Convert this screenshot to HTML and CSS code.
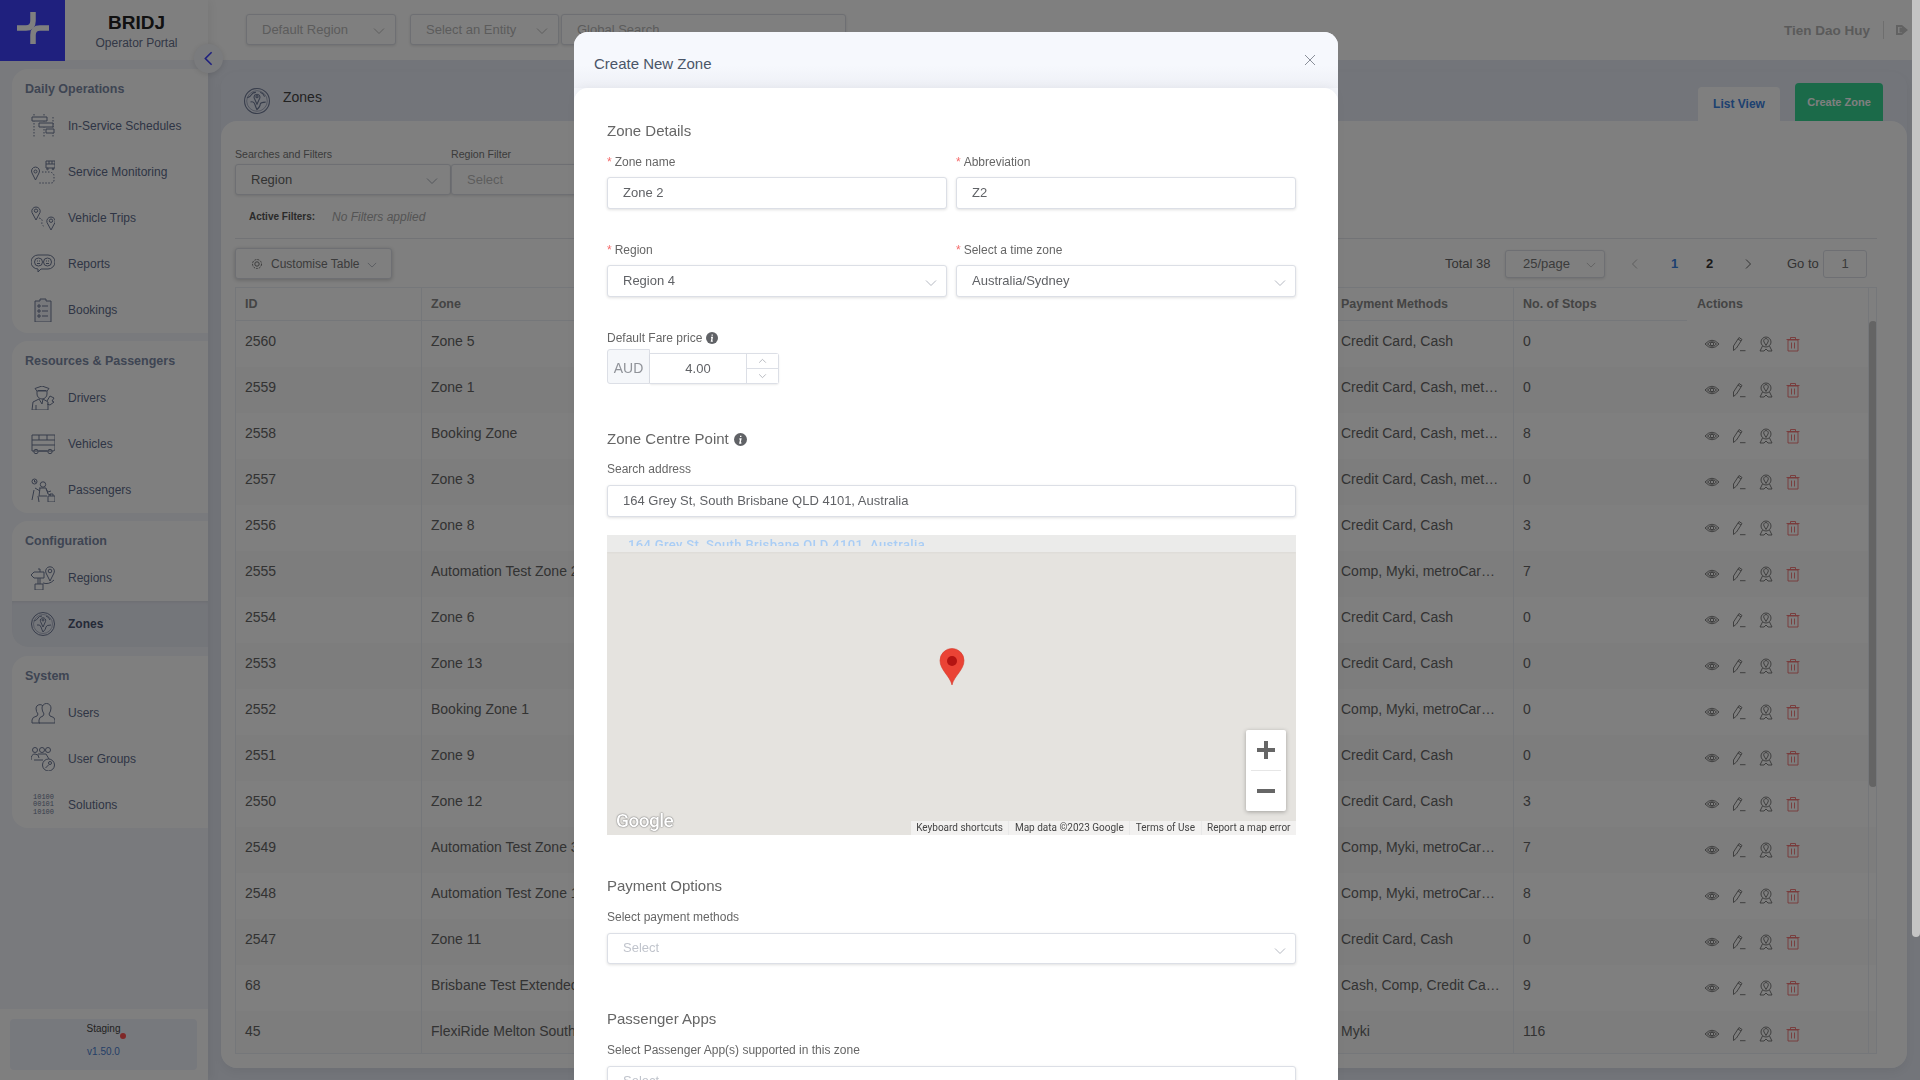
FILE: index.html
```html
<!DOCTYPE html>
<html lang="en">
<head>
<meta charset="utf-8">
<title>Zones</title>
<link rel="stylesheet" href="styles.css">
</head>
<body>
<svg class="defs" width="0" height="0" aria-hidden="true">
  <defs>
    <symbol id="i-sched" viewBox="0 0 24 24"><path class="dash" d="M3 0v24M13 0v24M22 3v21"/><path class="fillw" d="M1 3h15v4H1zM8 9h14v4H8zM15 15h8v4h-8z"/></symbol>
    <symbol id="i-mon" viewBox="0 0 24 24"><path d="M15 1h9v7h-9zM15 4h9M18 1v3M21 1v3"/><circle cx="16.500" cy="9" r=".8"/><circle cx="22" cy="9" r=".8"/><path d="M4.500 20 1 13a4 4 0 1 1 7 0z"/><circle cx="4.500" cy="11.500" r="1.500"/><path class="dash" d="M11 12h8q4 1 4 4v4q0 3-3 3H8"/></symbol>
    <symbol id="i-trip" viewBox="0 0 24 24"><path d="M5 14 1 6.500a4.200 4.200 0 1 1 8 0z"/><circle cx="5" cy="4.700" r="1.700"/><path d="M20 24l-4-7.500a4.200 4.200 0 1 1 8 0z"/><circle cx="20" cy="14.700" r="1.700"/><path class="dash" d="M8 12q4 1 3 4t3 5"/></symbol>
    <symbol id="i-rep" viewBox="0 0 24 24"><path d="M7 3h10a7 7 0 0 1 0 14h-7l-3 3v-3a7 7 0 0 1 0-14z"/><circle cx="7.500" cy="10" r="4"/><circle cx="16.500" cy="10" r="4"/><path d="M6 9h1M8 9h1M15 9h1M17 9h1M6 11.500h3M15 11.500h3"/></symbol>
    <symbol id="i-book" viewBox="0 0 24 24"><path class="fillg" d="M4 3h5V1h6v2h5v21H4z"/><path d="M7 7h2v2H7zM11 8h6M7 12h2v2H7zM11 13h6M7 17h2v2H7zM11 18h6"/></symbol>
    <symbol id="i-drv" viewBox="0 0 24 24"><path d="M4 2.500 11 0l7 2.500-2 2.500H6zM6 5v3a5 5 0 0 0 10 0V5M7 4.500h8M8 13l-6 3-1 8h16v-8l-5-3M8 13l3 5 1-5M5 19v5"/><path d="M16 15l3-5 4 2-2 3 2 1-4 3-3-1"/></symbol>
    <symbol id="i-bus" viewBox="0 0 24 24"><path d="M1 3h23v14q0 2-2 2H1zM1 8h23M8 3v5M16 3v5M1 13h23M8 19h8"/><circle cx="5" cy="19.500" r="2.200"/><circle cx="19" cy="19.500" r="2.200"/></symbol>
    <symbol id="i-pas" viewBox="0 0 24 24"><circle cx="3.500" cy="3.500" r="2.500"/><path d="M3.500 2v2h2"/><circle cx="12" cy="6.500" r="2.700"/><path d="M8 10h7l2 6 3 1M9 10l-1 8h8M4 10l5 3M3 12l-2 10M7 18l1 6M17 18h7v6h-7zM19 18v-2h3v2"/><path d="M15 11l2 3 3-1"/></symbol>
    <symbol id="i-reg" viewBox="0 0 24 24"><path d="M3 6h10v6H3L0 9zM7 3h2v3M7 12v6M9 12v6M4 18h8v6H4z"/><path d="M19 15l-4-8a4.400 4.400 0 1 1 8 0z"/><circle cx="19" cy="5" r="1.800"/><path d="M12 17q6 2 11-3"/></symbol>
    <symbol id="i-globe" viewBox="0 0 24 24"><circle cx="12" cy="12" r="11.500"/><circle cx="12" cy="12" r="9.500" class="thin"/><path d="M12 15 9.500 9.500a2.700 2.700 0 1 1 5 0z"/><circle cx="12" cy="8" r="1"/><path d="M3 9q3-1 4-3t4-2M6 13q3-1 4 2t2 5q3-3 3-5t5-2M15 4q3 1 4 4"/></symbol>
    <symbol id="i-users" viewBox="0 0 24 24"><path d="M1 22v-3q0-3 5-4l1-2q-2-2-2-6a4 4 0 0 1 7 -2"/><path d="M8 22h16v-3q0-3-5-4l-1-2q2-3 2-6a4.500 4.500 0 0 0-9 0q0 3 2 6l-1 2q-4 1-4 4v3"/><path d="M1 22h8"/></symbol>
    <symbol id="i-grp" viewBox="0 0 24 24"><circle cx="4" cy="3" r="2.500"/><circle cx="11" cy="3" r="2.500"/><circle cx="17" cy="3" r="2.500"/><path d="M0 13q0-6 4-6t4 4M7 7h8l3 5M3 13h9"/><circle cx="17.500" cy="18" r="6"/><circle cx="19" cy="16" r="1.500"/><path d="M18 17.500l-3.500 3.500"/></symbol>
    <symbol id="i-eye" viewBox="0 0 16 16"><path d="M1 8q7-7.500 14 0q-7 7.500-14 0z"/><path d="M3.500 8q4.500-4.500 9 0q-4.500 4.500-9 0z"/><circle cx="8" cy="8" r="1.700"/></symbol>
    <symbol id="i-pen" viewBox="0 0 16 16"><path d="M2.500 14.500V10L8 1.500l3 2-5.500 8.500zM7 3l3 2M9 14.700h5.500"/></symbol>
    <symbol id="i-med" viewBox="0 0 16 16"><circle cx="8" cy="6" r="5"/><path d="M8 9.500 6 6a2.300 2.300 0 1 1 4 0z"/><path d="M4.500 10 2 15h4l2-2 2 2h4l-2.500-5"/></symbol>
    <symbol id="i-del" viewBox="0 0 16 16"><path d="M3 4h10v11H3zM1.500 3.500h13M5.500 3.500V1.500h5v2M6.500 6.500v6M9.500 6.500v6"/></symbol>
    <symbol id="i-down" viewBox="0 0 12 12"><path d="M1 3.500 6 8.500l5-5"/></symbol>
    <symbol id="i-info" viewBox="0 0 12 12"><circle class="solid" cx="6" cy="6" r="6"/><path class="inv" d="M6.200 2.600v1.200M5 5.500h1.300L5.500 9.200h1.300"/></symbol>
  </defs>
</svg>

<div class="app">
  <aside class="sidebar">
    <div class="brand">
      <div class="logo">
        <svg class="logo-mark" viewBox="0 0 32 32"><path d="M16 0V9Q16 16 9 16H0"/><path d="M32 16H23Q16 16 16 23V32"/></svg>
      </div>
      <div class="brand-text">
        <div class="brand-name">BRIDJ</div>
        <div class="brand-sub">Operator Portal</div>
      </div>
    </div>
    <nav class="nav">
      <section class="nav-card">
        <h3 class="nav-head">Daily Operations</h3>
        <a class="nav-item"><svg class="ico"><use href="#i-sched"/></svg>In-Service Schedules</a>
        <a class="nav-item"><svg class="ico"><use href="#i-mon"/></svg>Service Monitoring</a>
        <a class="nav-item"><svg class="ico"><use href="#i-trip"/></svg>Vehicle Trips</a>
        <a class="nav-item"><svg class="ico"><use href="#i-rep"/></svg>Reports</a>
        <a class="nav-item"><svg class="ico"><use href="#i-book"/></svg>Bookings</a>
      </section>
      <section class="nav-card">
        <h3 class="nav-head">Resources &amp; Passengers</h3>
        <a class="nav-item"><svg class="ico"><use href="#i-drv"/></svg>Drivers</a>
        <a class="nav-item"><svg class="ico"><use href="#i-bus"/></svg>Vehicles</a>
        <a class="nav-item"><svg class="ico"><use href="#i-pas"/></svg>Passengers</a>
      </section>
      <section class="nav-card">
        <h3 class="nav-head">Configuration</h3>
        <a class="nav-item"><svg class="ico"><use href="#i-reg"/></svg>Regions</a>
        <a class="nav-item active"><svg class="ico"><use href="#i-globe"/></svg>Zones</a>
      </section>
      <section class="nav-card last-card">
        <h3 class="nav-head">System</h3>
        <a class="nav-item"><svg class="ico"><use href="#i-users"/></svg>Users</a>
        <a class="nav-item"><svg class="ico"><use href="#i-grp"/></svg>User Groups</a>
        <a class="nav-item"><span class="ico bin">10100<br>00101<br>10100</span>Solutions</a>
      </section>
    </nav>
    <footer class="side-foot">
      <div class="env">
        <div class="env-name">Staging<span class="env-dot"></span></div>
        <div class="env-ver">v1.50.0</div>
      </div>
    </footer>
  </aside>

  <button class="collapse" aria-label="Collapse"><svg viewBox="0 0 12 12"><path d="M8.500 1 3.500 6l5 5"/></svg></button>

  <main class="main">
    <header class="topbar">
      <div class="box top-sel">Default Region<svg class="chev"><use href="#i-down"/></svg></div>
      <div class="box top-sel second">Select an Entity<svg class="chev"><use href="#i-down"/></svg></div>
      <div class="box top-search">Global Search</div>
      <div class="user">
        <span class="user-name">Tien Dao Huy</span>
        <span class="user-sep"></span>
        <svg class="logout" viewBox="0 0 12 12"><path d="M0 1h6v2H2v6h4v2H0zM6 3.500V1l6 5-6 5V8.500H3.500v-5z"/></svg>
      </div>
    </header>

    <section class="panel">
      <div class="panel-head">
        <div class="panel-title"><svg class="ico big"><use href="#i-globe"/></svg><span class="panel-name">Zones</span></div>
        <div class="panel-tabs">
          <span class="tab">List View</span>
          <span class="create">Create Zone</span>
        </div>
      </div>
      <div class="panel-body">
        <div class="filters">
          <div class="filter f-one"><label class="f-label">Searches and Filters</label><div class="box f-sel">Region<svg class="chev"><use href="#i-down"/></svg></div></div>
          <div class="filter f-two"><label class="f-label">Region Filter</label><div class="box f-sel muted">Select</div></div>
        </div>
        <div class="active-row"><b>Active Filters:</b><i>No Filters applied</i></div>
        <div class="toolbar">
          <div class="box custom"><svg class="gear" viewBox="0 0 12 12"><circle cx="6" cy="6" r="2.200"/><circle cx="6" cy="6" r="4.500" stroke-dasharray="2 1"/></svg>Customise Table<svg class="chev tiny"><use href="#i-down"/></svg></div>
          <div class="pager">
            <span class="total">Total 38</span>
            <div class="box size">25/page<svg class="chev tiny"><use href="#i-down"/></svg></div>
            <svg class="pg-arrow first" viewBox="0 0 12 12"><path d="M8 1.500 3.500 6 8 10.500"/></svg>
            <span class="pg cur">1</span>
            <span class="pg">2</span>
            <svg class="pg-arrow next" viewBox="0 0 12 12"><path d="M4 1.500 8.500 6 4 10.500"/></svg>
            <span class="goto">Go to</span>
            <div class="box go-in">1</div>
          </div>
        </div>
        <div class="table">
          <div class="tr th"><span>ID</span><span>Zone</span><span>Payment Methods</span><span>No. of Stops</span><span class="act-h">Actions</span></div>
          <div class="tr"><span>2560</span><span>Zone 5</span><span>Credit Card, Cash</span><span>0</span><span class="acts"><svg><use href="#i-eye"/></svg><svg><use href="#i-pen"/></svg><svg><use href="#i-med"/></svg><svg class="red"><use href="#i-del"/></svg></span></div>
          <div class="tr"><span>2559</span><span>Zone 1</span><span>Credit Card, Cash, met…</span><span>0</span><span class="acts"><svg><use href="#i-eye"/></svg><svg><use href="#i-pen"/></svg><svg><use href="#i-med"/></svg><svg class="red"><use href="#i-del"/></svg></span></div>
          <div class="tr"><span>2558</span><span>Booking Zone</span><span>Credit Card, Cash, met…</span><span>8</span><span class="acts"><svg><use href="#i-eye"/></svg><svg><use href="#i-pen"/></svg><svg><use href="#i-med"/></svg><svg class="red"><use href="#i-del"/></svg></span></div>
          <div class="tr"><span>2557</span><span>Zone 3</span><span>Credit Card, Cash, met…</span><span>0</span><span class="acts"><svg><use href="#i-eye"/></svg><svg><use href="#i-pen"/></svg><svg><use href="#i-med"/></svg><svg class="red"><use href="#i-del"/></svg></span></div>
          <div class="tr"><span>2556</span><span>Zone 8</span><span>Credit Card, Cash</span><span>3</span><span class="acts"><svg><use href="#i-eye"/></svg><svg><use href="#i-pen"/></svg><svg><use href="#i-med"/></svg><svg class="red"><use href="#i-del"/></svg></span></div>
          <div class="tr"><span>2555</span><span>Automation Test Zone 2</span><span>Comp, Myki, metroCar…</span><span>7</span><span class="acts"><svg><use href="#i-eye"/></svg><svg><use href="#i-pen"/></svg><svg><use href="#i-med"/></svg><svg class="red"><use href="#i-del"/></svg></span></div>
          <div class="tr"><span>2554</span><span>Zone 6</span><span>Credit Card, Cash</span><span>0</span><span class="acts"><svg><use href="#i-eye"/></svg><svg><use href="#i-pen"/></svg><svg><use href="#i-med"/></svg><svg class="red"><use href="#i-del"/></svg></span></div>
          <div class="tr"><span>2553</span><span>Zone 13</span><span>Credit Card, Cash</span><span>0</span><span class="acts"><svg><use href="#i-eye"/></svg><svg><use href="#i-pen"/></svg><svg><use href="#i-med"/></svg><svg class="red"><use href="#i-del"/></svg></span></div>
          <div class="tr"><span>2552</span><span>Booking Zone 1</span><span>Comp, Myki, metroCar…</span><span>0</span><span class="acts"><svg><use href="#i-eye"/></svg><svg><use href="#i-pen"/></svg><svg><use href="#i-med"/></svg><svg class="red"><use href="#i-del"/></svg></span></div>
          <div class="tr"><span>2551</span><span>Zone 9</span><span>Credit Card, Cash</span><span>0</span><span class="acts"><svg><use href="#i-eye"/></svg><svg><use href="#i-pen"/></svg><svg><use href="#i-med"/></svg><svg class="red"><use href="#i-del"/></svg></span></div>
          <div class="tr"><span>2550</span><span>Zone 12</span><span>Credit Card, Cash</span><span>3</span><span class="acts"><svg><use href="#i-eye"/></svg><svg><use href="#i-pen"/></svg><svg><use href="#i-med"/></svg><svg class="red"><use href="#i-del"/></svg></span></div>
          <div class="tr"><span>2549</span><span>Automation Test Zone 3</span><span>Comp, Myki, metroCar…</span><span>7</span><span class="acts"><svg><use href="#i-eye"/></svg><svg><use href="#i-pen"/></svg><svg><use href="#i-med"/></svg><svg class="red"><use href="#i-del"/></svg></span></div>
          <div class="tr"><span>2548</span><span>Automation Test Zone 1</span><span>Comp, Myki, metroCar…</span><span>8</span><span class="acts"><svg><use href="#i-eye"/></svg><svg><use href="#i-pen"/></svg><svg><use href="#i-med"/></svg><svg class="red"><use href="#i-del"/></svg></span></div>
          <div class="tr"><span>2547</span><span>Zone 11</span><span>Credit Card, Cash</span><span>0</span><span class="acts"><svg><use href="#i-eye"/></svg><svg><use href="#i-pen"/></svg><svg><use href="#i-med"/></svg><svg class="red"><use href="#i-del"/></svg></span></div>
          <div class="tr"><span>68</span><span>Brisbane Test Extended</span><span>Cash, Comp, Credit Ca…</span><span>9</span><span class="acts"><svg><use href="#i-eye"/></svg><svg><use href="#i-pen"/></svg><svg><use href="#i-med"/></svg><svg class="red"><use href="#i-del"/></svg></span></div>
          <div class="tr"><span>45</span><span>FlexiRide Melton South</span><span>Myki</span><span>116</span><span class="acts"><svg><use href="#i-eye"/></svg><svg><use href="#i-pen"/></svg><svg><use href="#i-med"/></svg><svg class="red"><use href="#i-del"/></svg></span></div>
          <div class="tbl-scroll"><div class="tbl-thumb"></div></div>
        </div>
      </div>
    </section>
  </main>
</div>

<div class="overlay"></div>

<div class="modal-wrap">
  <div class="modal">
    <header class="modal-head">
      <span class="modal-title">Create New Zone</span>
      <svg class="close" viewBox="0 0 12 12"><path d="M1 1l10 10M11 1 1 11"/></svg>
    </header>
    <div class="modal-body">
      <h4 class="sec first-sec">Zone Details</h4>
      <div class="grid">
        <div class="field"><label class="lbl"><em>*</em> Zone name</label><div class="inp">Zone 2</div></div>
        <div class="field"><label class="lbl"><em>*</em> Abbreviation</label><div class="inp">Z2</div></div>
        <div class="field"><label class="lbl"><em>*</em> Region</label><div class="inp sel">Region 4<svg class="chev"><use href="#i-down"/></svg></div></div>
        <div class="field"><label class="lbl"><em>*</em> Select a time zone</label><div class="inp sel">Australia/Sydney<svg class="chev"><use href="#i-down"/></svg></div></div>
      </div>
      <label class="lbl fare-lbl">Default Fare price <svg class="info"><use href="#i-info"/></svg></label>
      <div class="fare">
        <span class="fare-cur">AUD</span>
        <div class="fare-num">
          <span class="fare-val">4.00</span>
          <span class="fare-step"><svg viewBox="0 0 12 12"><path d="M2 8 6 4l4 4"/></svg><svg viewBox="0 0 12 12"><path d="M2 4l4 4 4-4"/></svg></span>
        </div>
      </div>

      <h4 class="sec centre-sec">Zone Centre Point <svg class="info big-info"><use href="#i-info"/></svg></h4>
      <label class="lbl addr-lbl">Search address</label>
      <div class="inp addr">164 Grey St, South Brisbane QLD 4101, Australia</div>

      <div class="map">
        <div class="map-strip"><span>164 Grey St, South Brisbane QLD 4101, Australia</span></div>
        <svg class="pin" viewBox="0 0 26 38"><path d="M13 37C11 28 1 22 1 12.500a12 12 0 0 1 24 0C25 22 15 28 13 37z"/><circle cx="13" cy="13" r="5"/></svg>
        <div class="zoomctl"><span class="z-plus"></span><span class="z-line"></span><span class="z-minus"></span></div>
        <span class="g-logo">Google</span>
        <div class="attrib"><span>Keyboard shortcuts</span><span>Map data ©2023 Google</span><span>Terms of Use</span><span>Report a map error</span></div>
      </div>

      <h4 class="sec pay-sec">Payment Options</h4>
      <label class="lbl sub-lbl">Select payment methods</label>
      <div class="inp sel ph">Select<svg class="chev"><use href="#i-down"/></svg></div>

      <h4 class="sec apps-sec">Passenger Apps</h4>
      <label class="lbl sub-lbl">Select Passenger App(s) supported in this zone</label>
      <div class="inp sel ph">Select<svg class="chev"><use href="#i-down"/></svg></div>
    </div>
  </div>
</div>
<div class="page-thumb"></div>
</body>
</html>
```

FILE: styles.css
```css
* { box-sizing: border-box; }
html, body { margin: 0; height: 100%; overflow: hidden; }
body { font-family: "Liberation Sans", Arial, sans-serif; color: #666; background: #e6eaf4; }
.defs { position: absolute; }
svg { fill: none; stroke: #6f7a96; stroke-width: 1; }
h3, h4 { margin: 0; font-weight: normal; }
label { display: block; }

.app { display: flex; height: 1080px; }

/* sidebar */
.sidebar { width: 208px; flex: none; display: flex; flex-direction: column; background: #f3f5fa; box-shadow: 3px 0 10px rgba(0,0,0,.06); position: relative; z-index: 1; }
.brand { height: 60px; background: #fff; display: flex; flex: none; }
.logo { width: 65px; height: 61px; background: #3e40fc; display: flex; align-items: center; justify-content: center; flex: none; padding: 0 0 5px 1px; }
.logo-mark { width: 32px; height: 32px; stroke: #fff; stroke-width: 5.500; }
.brand-text { flex: 1; text-align: center; padding-top: 13px; }
.brand-name { font-weight: bold; font-size: 19px; line-height: 20px; color: #222; }
.brand-sub { font-size: 12px; line-height: 16px; margin-top: 2px; color: #66708c; }
.nav { display: flex; flex-direction: column; gap: 8px; padding: 9px 0 0 12px; }
.nav-card { background: #fff; border-radius: 16px 0 0 16px; overflow: hidden; }
.last-card { margin-top: 1px; }
.nav-head { font-size: 12.500px; font-weight: bold; height: 34px; line-height: 20px; padding: 10px 0 0 13px; color: #7d8aa6; }
.nav-item { display: flex; align-items: center; gap: 13px; height: 46px; padding-left: 19px; font-size: 12px; color: #5e6b8a; }
.nav-item.active { background: #e9ecf5; font-weight: bold; color: #4a5470; box-shadow: inset 0 3px 4px -3px rgba(0,0,0,.12); }
.ico { width: 24px; height: 24px; flex: none; }
.ico.big { width: 26px; height: 26px; }
.bin { font-family: "Liberation Mono", monospace; font-size: 7px; line-height: 7.400px; color: #6f7a96; display: block; padding: 1px 0 0 2px; }
.dash { stroke-dasharray: 1.500 1.500; }
.fillw { fill: #fff; }
.fillg { fill: #eef0f6; }
.thin { stroke-width: .5; }
.side-foot { margin-top: auto; height: 71px; background: #fff; padding: 10px 11px 10px 10px; flex: none; }
.env { height: 51px; background: #eff2fa; border-radius: 4px; text-align: center; font-size: 10px; }
.env-name { color: #444; padding-top: 4px; line-height: 12px; position: relative; }
.env-dot { position: absolute; left: 110px; top: 14px; width: 6px; height: 6px; border-radius: 50%; background: #ff5050; }
.env-ver { color: #4a7fd0; margin-top: 11px; line-height: 12px; }

.collapse { position: absolute; left: 194px; top: 44px; width: 29px; height: 29px; border: 0; border-radius: 50%; background: #f4f6fb; box-shadow: 0 1px 6px rgba(0,0,0,.12); z-index: 2; padding: 7px; display: flex; }
.collapse svg { width: 15px; height: 15px; stroke: #3e40fc; stroke-width: 1.300; }

/* main */
.main { flex: 1; min-width: 0; display: flex; flex-direction: column; }
.topbar { height: 60px; flex: none; background: #fff; display: flex; align-items: flex-start; padding: 14px 0 0 38px; position: relative; }
.box { border: 1px solid #dcdfe6; border-radius: 3px; background: #fff; box-shadow: 0 1px 3px rgba(0,0,0,.12); display: flex; align-items: center; font-size: 13px; color: #999; position: relative; }
.chev { width: 12px; height: 12px; position: absolute; right: 12px; top: 50%; margin-top: -5px; stroke: #a8adb8; }
.chev.tiny { width: 10px; height: 10px; margin-top: -4px; }
.top-sel { width: 150px; height: 31px; padding-left: 15px; color: #b8b8b8; }
.top-sel .chev { right: 10px; stroke: #bbb; }
.top-sel.second { width: 149px; margin-left: 14px; }
.top-search { width: 285px; height: 31px; margin-left: 2px; padding-left: 15px; color: #b8b8b8; }
.user { position: absolute; left: 1576px; top: 0; height: 60px; display: flex; align-items: center; }
.user-name { font-size: 13.500px; font-weight: bold; color: #b5b5b5; width: 99px; }
.user-sep { width: 1px; height: 18px; background: #ddd; }
.logout { width: 12px; height: 12px; margin-left: 12px; fill: #c4c4c4; stroke: none; }

.panel { flex: 1; min-height: 0; margin: 12px 13px 12px 13px; display: flex; flex-direction: column; border-radius: 16px; background: linear-gradient(#e6eaf5, #e9edf7); box-shadow: 0 4px 10px rgba(0,0,0,.05); }
.panel-head { height: 49px; flex: none; display: flex; justify-content: space-between; align-items: flex-start; }
.panel-title { display: flex; align-items: center; gap: 13px; padding: 16px 0 0 23px; font-size: 14px; color: #444; }
.panel-name { line-height: 18px; padding-bottom: 8px; }
.panel-tabs { display: flex; align-items: flex-end; height: 49px; gap: 15px; padding-right: 24px; }
.tab { width: 82px; height: 34px; background: #fff; border-radius: 4px 4px 0 0; font-size: 12px; font-weight: bold; color: #3b82e0; display: flex; align-items: center; justify-content: center; }
.create { width: 88px; height: 38px; background: #36d493; border-radius: 4px 4px 0 0; font-size: 11px; font-weight: bold; color: #fff; display: flex; align-items: center; justify-content: center; }
.panel-body { flex: 1; min-height: 0; background: #fff; border-radius: 16px; padding: 26px 30px 15px 14px; display: flex; flex-direction: column; }
.filters { display: flex; flex: none; }
.filter.f-one { width: 216px; }
.filter.f-two { width: 220px; }
.f-label { font-size: 10.600px; line-height: 14px; height: 17px; color: #777; }
.f-sel { height: 31px; width: 100%; padding-left: 15px; color: #666; }
.f-sel.muted { color: #bbb; padding-left: 15px; }
.active-row { height: 44px; flex: none; border-bottom: 1px solid #e4e7ed; display: flex; align-items: center; padding: 0 0 0 14px; }
.active-row b { font-size: 10px; color: #555; width: 83px; }
.active-row i { font-size: 12px; color: #aaa; }
.toolbar { flex: none; display: flex; justify-content: space-between; align-items: center; margin-top: 9px; height: 31px; }
.custom { width: 157px; height: 31px; font-size: 12px; color: #777; padding-left: 15px; box-shadow: 0 1px 4px rgba(0,0,0,.22); }
.gear { width: 12px; height: 12px; margin-right: 8px; stroke: #777; }
.custom .chev { right: 14px; }
.pager { display: flex; align-items: center; font-size: 13px; color: #666; }
.total { width: 60px; }
.size { width: 100px; height: 28px; padding-left: 17px; color: #777; }
.size .chev { right: 8px; stroke: #bbb; }
.pg-arrow { width: 12px; height: 12px; stroke: #888; }
.pg-arrow.first { margin-left: 24px; stroke: #bbb; }
.pg { width: 35px; text-align: center; font-weight: bold; color: #333; font-size: 13px; }
.pg.cur { margin-left: 16px; color: #3b82e0; }
.pg-arrow.next { margin-left: 15px; stroke: #666; }
.goto { margin-left: 33px; width: 36px; }
.go-in { width: 44px; height: 28px; justify-content: center; color: #777; box-shadow: none; margin-right: 10px; }

.table { margin-top: 8px; height: 767px; flex: none; border: 1px solid #ebeef5; overflow: hidden; position: relative; }
.tr { display: grid; grid-template-columns: 186px 910px 182px 173px 181px; height: 46px; font-size: 14px; color: #666; }
.tr:nth-child(2n+1):not(.th) { background: #fafafa; }
.tr > span { padding: 0 6px 6px 9px; display: flex; align-items: center; border-right: 1px solid #ebeef5; white-space: nowrap; }
.tr > span:nth-child(4), .tr > span:last-child { border-right: 0; }
.th { height: 33px; background: #fff; }
.th > span { padding: 0 6px 1px 9px; font-size: 12.500px; font-weight: bold; color: #888; border-bottom: 1px solid #ebeef5; }
.th > .act-h { border-bottom: 0; padding-left: 10px; }
.acts { gap: 10px; padding: 0 0 0 17px !important; }
.acts svg { width: 16px; height: 16px; flex: none; margin-right: 1px; stroke: #707070; stroke-width: .9; }
.acts svg.red { stroke: #f07070; }
.tbl-scroll { position: absolute; left: 1632px; top: 0; bottom: 0; width: 9px; border-left: 1px solid #ebeef5; }
.tbl-thumb { position: absolute; top: 33px; left: 0; width: 8px; height: 466px; border-radius: 4px; background: #c9c9c9; }

/* dim layer and modal */
.overlay { position: fixed; inset: 0; background: rgba(0,0,0,.5); z-index: 5; }
.modal-wrap { position: fixed; top: 0; left: 0; width: 1912px; height: 1080px; overflow: hidden; z-index: 6; display: flex; justify-content: center; padding-top: 32px; }
.modal { width: 764px; height: 1200px; flex: none; background: #f5f7fc; border-radius: 14px 14px 0 0; display: flex; flex-direction: column; }
.modal-head { height: 56px; flex: none; display: flex; justify-content: space-between; padding: 0 22px 0 20px; border-radius: 14px 14px 0 0; background: linear-gradient(#f6f8fd 60%, #eef0f6); }
.modal-title { font-size: 15px; line-height: 20px; margin-top: 22px; color: #4a5568; }
.close { width: 12px; height: 12px; margin-top: 22px; stroke: #8a8f99; }
.modal-body { flex: 1; background: #fff; border-radius: 14px 14px 0 0; padding: 33px 42px 0 33px; box-shadow: 0 -2px 8px rgba(0,0,0,.04); }
.sec { font-size: 15px; line-height: 20px; height: 20px; color: #666; display: flex; align-items: center; }
.lbl { font-size: 12px; line-height: 16px; height: 16px; color: #666; display: flex; align-items: center; gap: 3px; }
.lbl em { color: #f56c6c; font-style: normal; }
.grid { display: grid; grid-template-columns: 340px 340px; column-gap: 9px; row-gap: 33px; margin-top: 13px; }
.field .lbl { margin-bottom: 7px; }
.inp { height: 32px; border: 1px solid #dcdfe6; border-radius: 3px; background: #fff; box-shadow: 0 1px 3px rgba(0,0,0,.12); padding-left: 15px; font-size: 13px; color: #606266; display: flex; align-items: center; position: relative; padding-bottom: 2px; }
.inp.sel .chev { stroke: #b5b9c2; right: 9px; margin-top: -4px; }
.inp.ph { color: #c0c4cc; margin-top: 8px; height: 31px; }
.fare-lbl { margin-top: 33px; }
.info { width: 12px; height: 12px; stroke: none; margin-left: 1px; }
.big-info { width: 13px; height: 13px; margin-left: 5px; }
.solid { fill: #606266; stroke: none; }
.inv { stroke: #fff; stroke-width: 1.300; }
.fare { display: flex; align-items: flex-end; margin-top: 3px; width: 172px; height: 35px; }
.fare-cur { width: 43px; height: 35px; background: #f5f7fa; border: 1px solid #dcdfe6; border-radius: 3px 0 0 3px; font-size: 14px; color: #909399; display: flex; align-items: center; justify-content: center; padding-top: 2px; }
.fare-num { flex: 1; height: 31px; border: 1px solid #dcdfe6; border-left: 0; border-radius: 0 3px 3px 0; display: flex; box-shadow: 0 1px 2px rgba(0,0,0,.08); }
.fare-val { flex: 1; font-size: 13px; color: #606266; display: flex; align-items: center; justify-content: center; }
.fare-step { width: 32px; border-left: 1px solid #dcdfe6; display: flex; flex-direction: column; background: #fff; }
.fare-step svg { flex: 1; width: 100%; height: 14px; padding: 2px 0; stroke: #a0a4ac; stroke-width: .9; }
.fare-step svg + svg { border-top: 1px solid #dcdfe6; }
.centre-sec { margin-top: 45px; }
.addr-lbl { margin-top: 12px; }
.addr { margin-top: 8px; height: 32px; padding-bottom: 2px; }
.map { margin-top: 18px; height: 300px; background: #e5e3df; position: relative; overflow: hidden; }
.map-strip { height: 17px; background: #ebebea; overflow: hidden; padding-left: 21px; box-shadow: 0 1px 2px rgba(0,0,0,.04); }
.map-strip span { display: block; font-family: "Roboto", sans-serif; font-size: 13px; font-weight: 500; line-height: 11px; height: 7px; overflow: hidden; margin-top: 4px; color: #a9cdf5; letter-spacing: .35px; white-space: nowrap; }
.pin { position: absolute; left: 332px; top: 113px; width: 26px; height: 38px; stroke: none; }
.pin path { fill: #ea4335; stroke: #d33a2c; stroke-width: .6; }
.pin circle { fill: #b31412; stroke: none; }
.zoomctl { position: absolute; right: 10px; top: 195px; width: 40px; height: 81px; background: #fff; box-shadow: 0 1px 4px rgba(0,0,0,.3); border-radius: 2px; }
.z-plus { position: absolute; left: 11px; top: 11px; width: 18px; height: 18px; background: linear-gradient(#666,#666) center/18px 4px no-repeat, linear-gradient(#666,#666) center/4px 18px no-repeat; }
.z-line { position: absolute; left: 5px; right: 5px; top: 40px; height: 1px; background: #e6e6e6; }
.z-minus { position: absolute; left: 11px; top: 59px; width: 18px; height: 4px; background: #666; }
.g-logo { position: absolute; left: 9px; top: 275px; font-family: "Roboto", sans-serif; font-size: 19px; font-weight: 500; line-height: 22px; color: #fff; letter-spacing: -.5px; text-shadow: 0 0 1.500px #6a6a6a, 0 0 1px #6a6a6a; }
.attrib { position: absolute; right: 0; bottom: 0; height: 14px; display: flex; background: rgba(245,245,245,.75); font-family: "Roboto", sans-serif; font-size: 10px; line-height: 14px; color: #444; }
.attrib span { padding: 0 5.500px; border-left: 1px solid #e8e8e8; }
.attrib span:first-child { border-left: 0; }
.pay-sec { margin-top: 41px; }
.apps-sec { margin-top: 45px; }
.sub-lbl { margin-top: 13px; }

.page-thumb { position: fixed; right: 0; top: 0; width: 8px; height: 937px; background: #c4c4c4; border-radius: 0 0 4px 4px; z-index: 7; }
```
